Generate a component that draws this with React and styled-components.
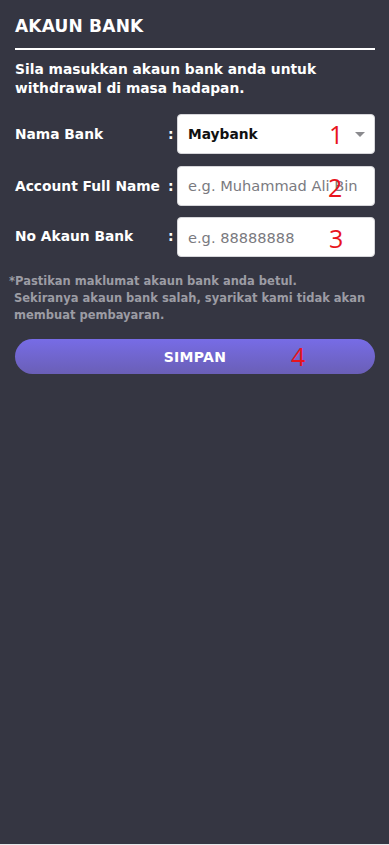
import React from "react";
import styled, { createGlobalStyle } from "styled-components";

const GlobalStyle = createGlobalStyle`
  html, body {
    margin: 0;
    padding: 0;
    background: #e8e8ea;
  }
  * { box-sizing: border-box; }
`;

const Page = styled.div`
  min-height: 844px;
  background: #353642;
  padding: 14px 14px 0 15px;
  font-family: "DejaVu Sans", "Noto Sans", sans-serif;
  color: #ffffff;
`;

const Title = styled.h1`
  margin: 0;
  font-size: 17px;
  font-weight: 700;
  line-height: 24px;
  letter-spacing: 0.2px;
  padding-bottom: 10px;
  border-bottom: 2px solid #ffffff;
`;

const Intro = styled.p`
  margin: 10px 0 0;
  font-size: 13.8px;
  font-weight: 700;
  line-height: 19px;
`;

const Form = styled.div`
  margin-top: 16px;
  display: flex;
  flex-direction: column;
  gap: 11.5px;
`;

const Row = styled.div`
  display: grid;
  grid-template-columns: 153px 9px 1fr;
  align-items: center;
`;

const Label = styled.span`
  font-size: 13.8px;
  font-weight: 700;
  white-space: nowrap;
  padding-bottom: ${(p) => p.$lift || 0}px;
`;

const Colon = styled.span`
  font-size: 14px;
  font-weight: 700;
  padding-bottom: ${(p) => p.$lift || 0}px;
`;

const Field = styled.div`
  position: relative;
  height: 40px;
  background: #ffffff;
  border: 1px solid #d6d6da;
  border-radius: 4px;
  display: flex;
  align-items: center;
  padding: 0 10px;
  overflow: hidden;
  white-space: nowrap;
  font-size: ${(p) => (p.$placeholder ? 14.6 : 13.8)}px;
  color: ${(p) => (p.$placeholder ? "#7a7a80" : "#111111")};
  font-weight: ${(p) => (p.$placeholder ? 400 : 700)};
`;

const Caret = styled.span`
  position: absolute;
  right: 9px;
  top: 17px;
  width: 0;
  height: 0;
  border-left: 5px solid transparent;
  border-right: 5px solid transparent;
  border-top: 5px solid #8a8a8e;
`;

const Mark = styled.span`
  position: absolute;
  font-family: "Open Sans", "DejaVu Sans", sans-serif;
  font-weight: 400;
  font-size: 25px;
  line-height: 1;
  color: #e8141c;
  left: ${(p) => p.$x}px;
  top: ${(p) => p.$y}px;
`;

const Note = styled.p`
  margin: 15.5px 0 0 -6px;
  font-size: 11.5px;
  font-weight: 700;
  line-height: 17px;
  color: #9c9ca4;
`;

const NoteLine = styled.span`
  display: block;
  padding-left: ${(p) => (p.$indent ? 5 : 0)}px;
`;

const SaveButton = styled.button`
  position: relative;
  display: block;
  margin-top: 15.5px;
  width: 100%;
  height: 35px;
  border: none;
  border-radius: 18px;
  background: linear-gradient(180deg, #776ce6 0%, #6a5fb6 100%);
  color: #ffffff;
  font-family: "DejaVu Sans", sans-serif;
  font-size: 14px;
  font-weight: 700;
  letter-spacing: 0.3px;
`;

export default function App() {
  return (
    <>
      <GlobalStyle />
      <Page>
        <Title>AKAUN BANK</Title>
        <Intro>
          Sila masukkan akaun bank anda untuk withdrawal di masa hadapan.
        </Intro>
        <Form>
          <Row>
            <Label>Nama Bank</Label>
            <Colon>:</Colon>
            <Field>
              Maybank
              <Mark $x={151} $y={7}>1</Mark>
              <Caret />
            </Field>
          </Row>
          <Row>
            <Label>Account Full Name</Label>
            <Colon>:</Colon>
            <Field $placeholder>
              e.g. Muhammad Ali Bin
              <Mark $x={150} $y={8}>2</Mark>
            </Field>
          </Row>
          <Row>
            <Label $lift={3}>No Akaun Bank</Label>
            <Colon $lift={3}>:</Colon>
            <Field $placeholder>
              e.g. 88888888
              <Mark $x={151} $y={8}>3</Mark>
            </Field>
          </Row>
        </Form>
        <Note>
          <NoteLine>*Pastikan maklumat akaun bank anda betul.</NoteLine>
          <NoteLine $indent>
            Sekiranya akaun bank salah, syarikat kami tidak akan
          </NoteLine>
          <NoteLine $indent>membuat pembayaran.</NoteLine>
        </Note>
        <SaveButton>
          SIMPAN
          <Mark $x={276} $y={5}>4</Mark>
        </SaveButton>
      </Page>
    </>
  );
}
